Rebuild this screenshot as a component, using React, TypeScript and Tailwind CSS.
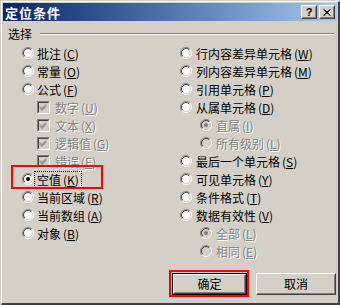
import React from "react";

// Classic Win2000 "定位条件" (Go To Special) dialog

type Item = {
  label: string;
  key: string;
  kind: "radio" | "check";
  indent?: boolean;
  disabled?: boolean;
  checked?: boolean;
  focus?: boolean;
  mark?: boolean;
};

const leftItems: Item[] = [
  { label: "批注", key: "C", kind: "radio" },
  { label: "常量", key: "O", kind: "radio" },
  { label: "公式", key: "F", kind: "radio" },
  { label: "数字", key: "U", kind: "check", indent: true, disabled: true, checked: true },
  { label: "文本", key: "X", kind: "check", indent: true, disabled: true, checked: true },
  { label: "逻辑值", key: "G", kind: "check", indent: true, disabled: true, checked: true },
  { label: "错误", key: "E", kind: "check", indent: true, disabled: true, checked: true },
  { label: "空值", key: "K", kind: "radio", checked: true, focus: true, mark: true },
  { label: "当前区域", key: "R", kind: "radio" },
  { label: "当前数组", key: "A", kind: "radio" },
  { label: "对象", key: "B", kind: "radio" },
];

const rightItems: Item[] = [
  { label: "行内容差异单元格", key: "W", kind: "radio" },
  { label: "列内容差异单元格", key: "M", kind: "radio" },
  { label: "引用单元格", key: "P", kind: "radio" },
  { label: "从属单元格", key: "D", kind: "radio" },
  { label: "直属", key: "I", kind: "radio", indent: true, disabled: true, checked: true },
  { label: "所有级别", key: "L", kind: "radio", indent: true, disabled: true },
  { label: "最后一个单元格", key: "S", kind: "radio" },
  { label: "可见单元格", key: "Y", kind: "radio" },
  { label: "条件格式", key: "T", kind: "radio" },
  { label: "数据有效性", key: "V", kind: "radio" },
  { label: "全部", key: "L", kind: "radio", indent: true, disabled: true, checked: true },
  { label: "相同", key: "E", kind: "radio", indent: true, disabled: true },
];

function Radio({ checked, disabled }: { checked?: boolean; disabled?: boolean }) {
  const a = 0.7071;
  const arc = (r: number, flip: boolean) => {
    const x1 = 6 - r * a, y1 = 6 + r * a, x2 = 6 + r * a, y2 = 6 - r * a;
    return flip
      ? `M${x2} ${y2} A${r} ${r} 0 0 1 ${x1} ${y1}`
      : `M${x1} ${y1} A${r} ${r} 0 0 1 ${x2} ${y2}`;
  };
  return (
    <svg width="12" height="12" viewBox="0 0 12 12" className="shrink-0">
      <circle cx="6" cy="6" r="5" fill={disabled ? "#d4d0c8" : "#ffffff"} />
      <path d={arc(5.5, false)} stroke="#808080" fill="none" />
      <path d={arc(5.5, true)} stroke="#ffffff" fill="none" />
      <path d={arc(4.5, false)} stroke="#404040" fill="none" />
      <path d={arc(4.5, true)} stroke="#d4d0c8" fill="none" />
      {checked && <circle cx="6" cy="6" r="2" fill={disabled ? "#808080" : "#000000"} />}
    </svg>
  );
}

function Check({ checked }: { checked?: boolean }) {
  return (
    <span className="w-[13px] h-[13px] shrink-0 border border-t-[#808080] border-l-[#808080] border-b-white border-r-white">
      <span className="block w-full h-full bg-[#d4d0c8] border border-t-[#404040] border-l-[#404040] border-b-[#d4d0c8] border-r-[#d4d0c8]">
        {checked && (
          <svg width="9" height="9" viewBox="0 0 9 9">
            <path d="M1 3.5 L3 5.5 L7 1.5 M1 4.5 L3 6.5 L7 2.5 M1 5.5 L3 7.5 L7 3.5" stroke="#808080" fill="none" />
          </svg>
        )}
      </span>
    </span>
  );
}

function Row({ item, col }: { item: Item; col: "left" | "right" }) {
  const pad =
    col === "left"
      ? item.indent ? "pl-[35px]" : "pl-[20px]"
      : item.indent ? "pl-[20px]" : "pl-0";
  const gap = item.kind === "check" ? "gap-[4px]" : col === "right" ? "gap-[3px]" : "gap-[2px]";
  const textCls = item.disabled
    ? "text-[#808080] [text-shadow:1px_1px_0_#ffffff]"
    : "text-black";
  return (
    <div className={`relative h-[18px] flex items-center ${pad} ${gap}`}>
      {item.kind === "radio" ? (
        <Radio checked={item.checked} disabled={item.disabled} />
      ) : (
        <Check checked={item.checked} />
      )}
      <span
        className={`whitespace-nowrap leading-[13px] px-[1px] ${textCls} ${
          item.focus ? "outline outline-1 outline-dotted outline-black outline-offset-[1px]" : ""
        }`}
      >
        {item.label}
        <span className="ml-[2px]">
          (<span className="underline underline-offset-1">{item.key}</span>)
        </span>
      </span>
      {item.mark && (
        <span className="absolute left-[9px] top-[-5px] w-[92px] h-[24px] border-2 border-[#ff0000]" />
      )}
    </div>
  );
}

function Button({ children, w, def }: { children: React.ReactNode; w: string; def?: boolean }) {
  return (
    <div className={`relative ${w} h-[22px]`}>
      <div className={`w-full h-full ${def ? "border border-black" : ""}`}>
        <div className="w-full h-full border border-t-white border-l-white border-b-[#404040] border-r-[#404040]">
          <div className="w-full h-full flex items-center justify-center border border-t-[#d4d0c8] border-l-[#d4d0c8] border-b-[#808080] border-r-[#808080] text-black">
            {children}
          </div>
        </div>
      </div>
      {def && (
        <span className="absolute left-[-3px] top-[-3px] right-[-2px] bottom-[-2px] border-2 border-[#ff0000]" />
      )}
    </div>
  );
}

function TitleButton({ children }: { children: React.ReactNode }) {
  return (
    <div className="w-[16px] h-[14px] bg-[#d4d0c8] border border-t-white border-l-white border-b-[#404040] border-r-[#404040]">
      <div className="w-full h-full flex items-center justify-center border border-t-[#d4d0c8] border-l-[#d4d0c8] border-b-[#808080] border-r-[#808080]">
        {children}
      </div>
    </div>
  );
}

export default function App() {
  return (
    <div
      className="relative w-[340px] h-[305px] overflow-hidden bg-[#d4d0c8] text-[12px] border-l border-t border-[#d4d0c8]"
      style={{ fontFamily: '"Noto Sans CJK SC", "Liberation Sans", sans-serif' }}
    >
      <div className="w-full h-full border-l border-t border-l-white border-t-white border-r-2 border-b-2 border-r-[#404040] border-b-[#404040] pt-[1px]">
        {/* Title bar */}
        <div className="mx-[1px] h-[18px] flex items-center justify-between pl-[2px] pr-[2px] bg-gradient-to-r from-[#0a246a] to-[#a6caf0]">
          <span className="text-white font-bold text-[13px] leading-none tracking-[1px]">定位条件</span>
          <div className="flex gap-[2px]">
            <TitleButton>
              <span className="text-[11px] font-bold leading-none text-black" style={{ fontFamily: '"Liberation Sans", sans-serif' }}>?</span>
            </TitleButton>
            <TitleButton>
              <svg width="8" height="7" viewBox="0 0 8 7">
                <path d="M0.5 0.5 L7 6.5 M1.5 0.5 L7.5 6.5 M7 0.5 L0.5 6.5 M7.5 0.5 L1 6.5" stroke="#000" />
              </svg>
            </TitleButton>
          </div>
        </div>

        {/* Section label */}
        <div className="mt-[6px] h-[14px] flex items-center pl-[6px] pr-[4px] gap-[8px]">
          <span className="leading-none text-black">选择</span>
          <div className="flex-1 h-[2px] border-t border-b border-t-[#808080] border-b-white" />
        </div>

        {/* Options */}
        <div className="mt-[3px] flex">
          <div className="w-[178px] flex flex-col">
            {leftItems.map((it, i) => (
              <Row key={i} item={it} col="left" />
            ))}
          </div>
          <div className="flex-1 flex flex-col">
            {rightItems.map((it, i) => (
              <Row key={i} item={it} col="right" />
            ))}
          </div>
        </div>

        {/* Buttons */}
        <div className="mt-[13px] flex pl-[170px] gap-[9px]">
          <Button w="w-[75px]" def>
            确定
          </Button>
          <Button w="w-[80px]">取消</Button>
        </div>
      </div>
    </div>
  );
}
